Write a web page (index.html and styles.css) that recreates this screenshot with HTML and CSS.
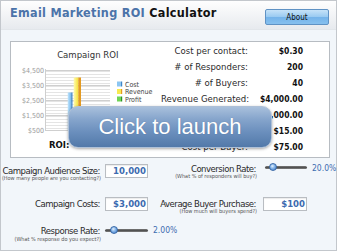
FILE: index.html
```html
<!DOCTYPE html>
<html>
<head>
<meta charset="utf-8">
<link rel="stylesheet" href="styles.css">
</head>
<body>
<div class="widget">
  <header class="header">
    <h1 class="title"><span class="title-blue">Email Marketing ROI</span> Calculator</h1>
    <button class="about">About</button>
  </header>
  <section class="panel">
    <svg class="chart" width="150" height="115" viewBox="0 0 150 115">
      <defs>
        <linearGradient id="gCost" x1="0" x2="1" y1="0" y2="0"><stop offset="0" stop-color="#c4e6fb"/><stop offset="1" stop-color="#72b6ee"/></linearGradient>
        <linearGradient id="gRev" x1="0" x2="1" y1="0" y2="0"><stop offset="0" stop-color="#fffbb0"/><stop offset="1" stop-color="#f5e23a"/></linearGradient>
        <linearGradient id="gPro" x1="0" x2="1" y1="0" y2="0"><stop offset="0" stop-color="#a8ec8e"/><stop offset="1" stop-color="#52c03e"/></linearGradient>
      </defs>
      <text class="c-title" x="76.8" y="15.7" text-anchor="middle">Campaign ROI</text>
      <g class="c-axis">
        <text x="33" y="30.5" text-anchor="end">$4,500</text>
        <text x="33" y="45.5" text-anchor="end">$3,500</text>
        <text x="33" y="60.5" text-anchor="end">$2,500</text>
        <text x="33" y="75.5" text-anchor="end">$1,500</text>
        <text x="33" y="90.5" text-anchor="end">$500</text>
      </g>
      <rect x="34" y="27" width="65" height="62" fill="#ffffff"/>
      <g stroke="#e4e4e4" stroke-width="1">
        <path d="M35 29.5H99M35 32.5H99M35 35.5H99M35 38.5H99M35 41.5H99M35 44.5H99M35 47.5H99M35 50.5H99M35 53.5H99M35 56.5H99M35 59.5H99M35 62.5H99M35 65.5H99M35 68.5H99M35 71.5H99M35 74.5H99M35 77.5H99M35 80.5H99M35 83.5H99M35 86.5H99"/>
      </g>
      <g stroke="#cfcfcf" stroke-width="1">
        <path d="M34 28.5H99M34 43.5H99M34 58.5H99M34 73.5H99M34 88.5H99"/>
        <path d="M34.5 27V89"/>
      </g>
      <rect x="56.7" y="50.5" width="3.5" height="38.5" fill="url(#gCost)"/>
      <rect x="60.2" y="50.5" width="1.3" height="38.5" fill="#3f86c8"/>
      <rect x="62.7" y="35.5" width="4.6" height="53.5" fill="url(#gRev)"/>
      <rect x="67.3" y="35.5" width="2.7" height="53.5" fill="#e39a22"/>
      <rect x="70.2" y="80.5" width="4.6" height="8.5" fill="url(#gPro)"/>
      <rect x="74.8" y="80.5" width="2" height="8.5" fill="#2f8f28"/>
      <rect x="106" y="39.5" width="4" height="5" fill="#8cc6f2"/>
      <rect x="110" y="39.5" width="1.2" height="5" fill="#3f86c8"/>
      <rect x="106" y="47" width="4" height="5" fill="#f8ea50"/>
      <rect x="110" y="47" width="1.2" height="5" fill="#e39a22"/>
      <rect x="106" y="54.5" width="4" height="5" fill="#6fd456"/>
      <rect x="110" y="54.5" width="1.2" height="5" fill="#2f8f28"/>
      <g class="c-legend">
        <text x="114" y="44.5">Cost</text>
        <text x="114" y="52">Revenue</text>
        <text x="114" y="59.5">Profit</text>
      </g>
      <text class="c-roi" x="38" y="106.3">ROI:</text>
      <text class="c-roival" x="77" y="106.3">33.3%</text>
    </svg>
    <dl class="stats">
      <dt>Cost per contact:</dt><dd>$0.30</dd>
      <dt># of Responders:</dt><dd>200</dd>
      <dt># of Buyers:</dt><dd>40</dd>
      <dt>Revenue Generated:</dt><dd>$4,000.00</dd>
      <dt>Profit:</dt><dd>$1,000.00</dd>
      <dt>Cost per Responder:</dt><dd>$15.00</dd>
      <dt>Cost per Buyer:</dt><dd>$75.00</dd>
    </dl>
  </section>
  <section class="inputs">
    <div class="field r1 left">
      <div class="lbl lbl-a"><div class="label">Campaign Audience Size:</div><div class="sub">(How many people are you contacting?)</div></div>
      <div class="box box-l">10,000</div>
    </div>
    <div class="field r1 right">
      <div class="lbl lbl-b"><div class="label">Conversion Rate:</div><div class="sub">(What % of responders will buy?)</div></div>
      <div class="slider slider-r"><span class="knob knob-r"></span></div>
      <div class="val val-r">20.0%</div>
    </div>
    <div class="field r2 left">
      <div class="lbl lbl-c"><div class="label">Campaign Costs:</div></div>
      <div class="box box-l">$3,000</div>
    </div>
    <div class="field r2 right">
      <div class="lbl lbl-c"><div class="label">Average Buyer Purchase:</div><div class="sub">(How much will buyers spend?)</div></div>
      <div class="box box-r">$100</div>
    </div>
    <div class="field r3 left">
      <div class="lbl lbl-b"><div class="label">Response Rate:</div><div class="sub sub-gap">(What % response do you expect?)</div></div>
      <div class="slider slider-l"><span class="knob knob-l"></span></div>
      <div class="val val-l">2.00%</div>
    </div>
  </section>
  <button class="launch">Click to launch</button>
</div>
</body>
</html>
```

FILE: styles.css
```css
html, body {
  margin: 0;
  padding: 0;
  background: #ffffff;
}
body {
  font-family: "DejaVu Sans Condensed", "DejaVu Sans", sans-serif;
  font-stretch: condensed;
  color: #2a2a2a;
}
.widget {
  position: relative;
  width: 337px;
  height: 251px;
  box-sizing: border-box;
  border: 1px solid #c3c7cc;
  background: #f2f6fa;
}
.header {
  height: 28px;
  border-bottom: 1px solid #e2e6ea;
  background: linear-gradient(#fefefe, #e7eaee);
  display: flex;
  justify-content: space-between;
  align-items: flex-start;
  padding: 0 7px 0 9px;
}
.title {
  margin: 5px 0 0 0;
  font-size: 12.5px;
  line-height: 14px;
  font-weight: bold;
  letter-spacing: 0.3px;
  color: #111111;
}
.title-blue {
  color: #4b73a9;
}
.about {
  margin-top: 8px;
  width: 64px;
  height: 16px;
  padding: 0;
  border: 1px solid #5f92c4;
  border-radius: 2px;
  background: linear-gradient(#c6e2f8, #98caf1 50%, #74b3ea 51%, #86c0ee);
  font-family: "DejaVu Sans Condensed", "DejaVu Sans", sans-serif;
  font-stretch: condensed;
  font-size: 8px;
  color: #111111;
}
.panel {
  margin: 11px 6px 0 9px;
  height: 117px;
  box-sizing: border-box;
  border: 1px solid #b7bcc2;
  background: #ffffff;
  display: flex;
  align-items: flex-start;
}
.chart {
  display: block;
  flex: none;
}
.chart text {
  font-family: "DejaVu Sans Condensed", "DejaVu Sans", sans-serif;
  font-stretch: condensed;
}
.c-title {
  font-size: 9.5px;
  fill: #333333;
}
.c-axis text {
  font-size: 7px;
  fill: #9a9a9a;
}
.c-legend text {
  font-size: 7px;
  fill: #444444;
}
.c-roi {
  font-size: 9.5px;
  font-weight: bold;
  fill: #111111;
}
.c-roival {
  font-size: 9px;
  fill: #666666;
}
.stats {
  margin: 1px 0 0 0;
  display: grid;
  grid-template-columns: 87px 55px;
  grid-auto-rows: 16px;
  line-height: 16px;
}
.stats dt {
  text-align: right;
  font-size: 9.5px;
  color: #2a2a2a;
  white-space: nowrap;
}
.stats dd {
  margin: 0;
  text-align: right;
  font-size: 8.5px;
  font-weight: bold;
  color: #111111;
}
.inputs {
  padding-top: 4px;
  display: grid;
  grid-template-columns: 149px 186px;
  grid-template-rows: 20px 20px 20px;
  row-gap: 11px;
}
.field {
  display: flex;
  align-items: flex-start;
  white-space: nowrap;
}
.r1.left { grid-area: 1 / 1; }
.r1.right { grid-area: 1 / 2; }
.r2.left { grid-area: 2 / 1; }
.r2.right { grid-area: 2 / 2; }
.r3.left { grid-area: 3 / 1; }
.lbl {
  flex: none;
  text-align: right;
}
.left .lbl { width: 99px; }
.right .lbl { width: 106px; }
.lbl-a { padding-top: 3.5px; }
.lbl-b { padding-top: 2px; }
.lbl-c { padding-top: 6px; }
.label {
  font-size: 9.5px;
  line-height: 9px;
  letter-spacing: -0.5px;
  color: #2a2a2a;
}
.sub {
  font-size: 5.5px;
  line-height: 6px;
  color: #555555;
  margin-right: -1px;
}
.sub-gap { margin-top: 1px; }
.box {
  flex: none;
  height: 14px;
  box-sizing: border-box;
  border: 1px solid #b9bdc2;
  background: #ffffff;
  box-shadow: inset 0 1px 1px rgba(0,0,0,0.08);
  text-align: right;
  padding-right: 1px;
  font-size: 9.5px;
  line-height: 12px;
  font-weight: bold;
  color: #3d6bb0;
}
.left .box { margin: 2px 0 0 5px; width: 43px; }
.r2.left .box { margin-top: 4px; }
.box-r { margin: 4px 0 0 7px; width: 44px; }
.slider {
  position: relative;
  flex: none;
  height: 3px;
  border-radius: 2px;
  background: linear-gradient(#7a7a7a, #4a4a4a 60%, #8a8a8a);
}
.slider-r { margin: 4px 0 0 9px; width: 42px; }
.slider-l { margin: 5px 0 0 5px; width: 43px; }
.knob {
  position: absolute;
  top: -3px;
  width: 8px;
  height: 8px;
  box-sizing: border-box;
  border-radius: 50%;
  border: 1px solid #3a6aa8;
  background: radial-gradient(circle at 40% 35%, #e4f0fc 0%, #8ab8ea 40%, #3c78c8 100%);
}
.knob-r { left: 4px; }
.knob-l { left: 5px; }
.val {
  flex: none;
  font-size: 8.5px;
  line-height: 12px;
  color: #3d6bb0;
}
.val-r { margin-left: 5px; }
.val-l { margin-left: 5px; margin-top: 0; }
.launch {
  position: absolute;
  left: 67px;
  top: 105px;
  width: 204px;
  height: 42px;
  box-sizing: border-box;
  padding: 0;
  border: 1px solid #aec0d7;
  border-radius: 10px;
  background: linear-gradient(#a9c0dc 0%, #86a5cc 30%, #6b8fbd 62%, #5279a9 100%);
  box-shadow: 0 1px 3px rgba(0,0,0,0.35);
  color: #ffffff;
  font-family: "Liberation Sans", Arial, sans-serif;
  font-size: 22px;
  text-align: center;
  text-shadow: 0 0 1px rgba(40,70,110,0.4);
}
```
